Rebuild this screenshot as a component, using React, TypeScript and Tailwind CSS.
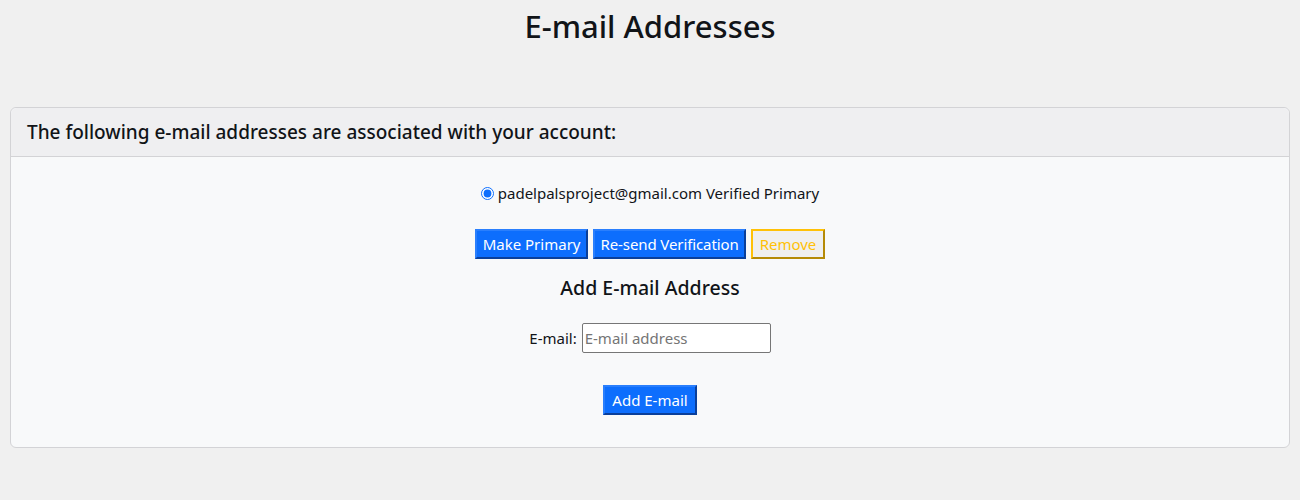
import React from "react";

export default function App() {
  const font = { fontFamily: '"Noto Sans", "Open Sans", sans-serif' };
  const blue =
    "h-[30px] border-2 border-t-[#2a7ffd] border-l-[#2a7ffd] border-r-[#0a3f9a] border-b-[#0a3f9a] bg-[#0d6efd] text-[15px] text-white";
  return (
    <div className="min-h-[500px] w-full bg-[#f0f0f0] text-[#111418]" style={font}>
      <h2 className="pt-[4px] text-center text-[31px] font-medium leading-[44px]">E-mail Addresses</h2>
      <div className="mx-[10px] mt-[59px] rounded-[6px] border border-[#d3d3d6] bg-[#f8f9fa]">
        <div className="rounded-t-[6px] border-b border-[#d3d3d6] bg-[#efeff1] px-[16px] py-[10px]">
          <h5 className="text-[19px] font-medium leading-[28px]">The following e-mail addresses are associated with your account:</h5>
        </div>
        <div className="flex flex-col items-center px-4 pt-[25px] pb-[32px]">
          <label className="flex items-center gap-[4px] text-[15px] leading-[22px]">
            <input type="radio" defaultChecked className="h-[13px] w-[13px] accent-[#0d6efd]" />
            <span>padelpalsproject@gmail.com Verified Primary</span>
          </label>
          <div className="mt-[25px] flex gap-[5px]">
            <button className={`${blue} px-[6px]`}>Make Primary</button>
            <button className={`${blue} px-[5px] tracking-[-0.1px]`}>Re-send Verification</button>
            <button className="h-[30px] border-2 border-t-[#ffc107] border-l-[#ffc107] border-r-[#b58a06] border-b-[#b58a06] bg-[#efefef] px-[7px] text-[15px] text-[#ffc107]">Remove</button>
          </div>
          <h4 className="mt-[15px] text-[19.5px] font-medium leading-[28px]">Add E-mail Address</h4>
          <div className="mt-[21px] flex items-center gap-[4px] text-[15px]">
            <label>E-mail:</label>
            <input
              type="email"
              placeholder="E-mail address"
              className="ml-[1px] h-[30px] w-[189px] rounded-[2px] border border-[#767676] bg-white px-[2px] text-[15px] placeholder:text-[#757575]"
            />
          </div>
          <button className={`${blue} mt-[32px] px-[7px]`}>Add E-mail</button>
        </div>
      </div>
    </div>
  );
}
